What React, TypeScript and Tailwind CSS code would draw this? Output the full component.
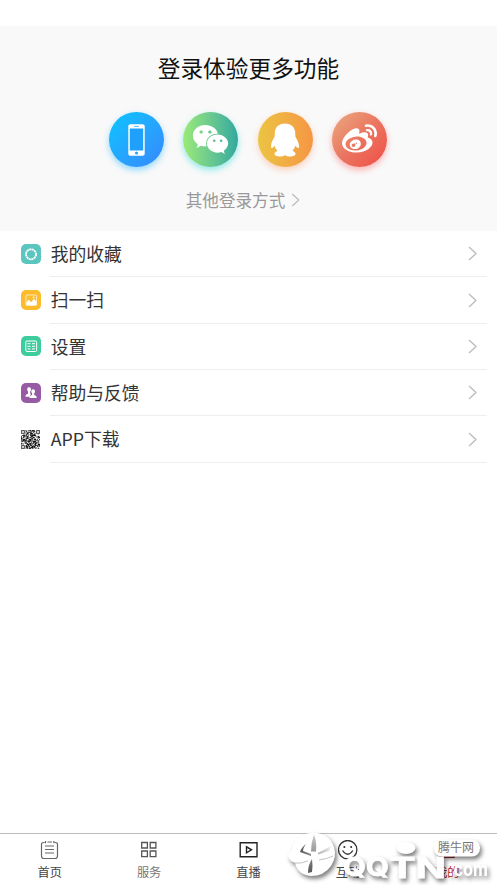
import type { ReactNode } from "react";
import { FaWeibo, FaWeixin } from "react-icons/fa";

function Chevron({ className }: { className: string }) {
  return (
    <svg className={className} viewBox="0 0 9 15" fill="none" stroke="currentColor" strokeWidth="1.3">
      <path d="M1 1l7 6.5L1 14" />
    </svg>
  );
}

function PhoneIcon() {
  return (
    <svg width="17" height="32" viewBox="0 0 17 32">
      <rect x="0.3" y="0.3" width="16.4" height="31.4" rx="2" fill="#fff" />
      <rect x="1.8" y="4.5" width="13.4" height="22" fill="#1fa0fb" />
      <path d="M6 2.4h5" stroke="#46b3ff" strokeWidth="0.9" />
      <circle cx="8.5" cy="29" r="1.5" fill="#1fa0fb" />
    </svg>
  );
}

function PenguinIcon() {
  return (
    <svg width="30" height="34" viewBox="0 0 30 34" fill="#fff">
      <path d="M15 .5C8.400 .5 4.700 4.800 4.700 10.200v3.200C2.800 16.500 1 20 1 23.200c0 1.600.6 2.200 1.300 1.700.9-.4 1.600-1.400 2.200-2.400.5 2 1.400 3.800 3 5.300-2 .8-3 1.900-3 3.200 0 1.500 2.200 2.500 5.200 2.500 2.400 0 4.300-.7 5.300-1.600 1 .9 2.900 1.600 5.300 1.600 3 0 5.200-1 5.200-2.500 0-1.300-1-2.400-3-3.200 1.600-1.500 2.500-3.300 3-5.300.6 1 1.300 2 2.200 2.400.7.5 1.300-.1 1.300-1.700 0-3.200-1.800-6.700-3.700-9.800v-3.200C25.300 4.800 21.600.5 15 .5z" />
    </svg>
  );
}

const logins = [
  { name: "phone", style: "bg-linear-to-br from-[#00c5ff] to-[#3487fc] shadow-[0_3px_6px_rgba(40,185,255,0.5)]", icon: <PhoneIcon /> },
  { name: "wechat", style: "bg-linear-to-r from-[#9bea76] to-[#30a99e] shadow-[0_3px_6px_rgba(45,220,220,0.5)]", icon: <FaWeixin className="h-[37px] w-[37px]" /> },
  { name: "qq", style: "bg-linear-to-r from-[#ebc442] to-[#f59644] shadow-[0_3px_6px_rgba(255,160,110,0.45)]", icon: <PenguinIcon /> },
  { name: "weibo", style: "bg-linear-to-br from-[#e8ab80] via-[#ea7561] to-[#f04943] shadow-[0_3px_6px_rgba(255,90,90,0.45)]", icon: <FaWeibo className="h-[35px] w-[35px]" /> },
];

function Tile({ className, children }: { className: string; children: ReactNode }) {
  return (
    <svg className={`h-5 w-5 rounded-[5px] ${className}`} viewBox="0 0 20 20" fill="none" stroke="#fff">
      {children}
    </svg>
  );
}

function QrIcon() {
  const size = 25;
  const inFinder = (x: number, y: number) => (x < 6 && y < 6) || (x > 18 && y < 6) || (x < 6 && y > 18);
  const cells: string[] = [];
  let seed = 7;
  for (let y = 0; y < size; y++) {
    for (let x = 0; x < size; x++) {
      seed = (seed * 1103 + 12345) % 65521;
      if (!inFinder(x, y) && seed % 100 < 60) cells.push(`M${x} ${y}h1v1h-1z`);
    }
  }
  return (
    <svg className="h-[19px] w-[19px]" viewBox="0 0 25 25">
      <path d={cells.join("")} fill="#111" />
      <path d="M.5.5h4v4h-4zM20.500.5h4v4h-4zM.5 20.500h4v4h-4z" fill="none" stroke="#111" />
      <path d="M2 2h1v1H2zM22 2h1v1h-1zM2 22h1v1H2z" fill="#111" />
    </svg>
  );
}

const rows: { label: string; icon: ReactNode }[] = [
  {
    label: "我的收藏",
    icon: (
      <Tile className="bg-[#5bc5bf]">
        <circle cx="10" cy="10.300" r="5" strokeWidth="1.800" strokeDasharray="2.200 0.420" />
      </Tile>
    ),
  },
  {
    label: "扫一扫",
    icon: (
      <Tile className="bg-[#fcbc2b]">
        <rect x="5" y="5" width="10.500" height="10.500" rx="1" strokeWidth="0.800" opacity="0.850" />
        <path d="M5.300 15v-2.500l2.500-3 2.200 2.700 3.200-3.500 2.300 3.300v3z" fill="#fff" stroke="none" />
        <circle cx="12.500" cy="7.300" r="0.900" fill="#fff" stroke="none" />
      </Tile>
    ),
  },
  {
    label: "设置",
    icon: (
      <Tile className="bg-[#3dcc9d]">
        <rect x="4.800" y="5" width="10.800" height="10.500" rx="1.200" strokeWidth="1" />
        <path d="M6.500 7.700h3M11 7.700h3M6.500 10.300h3M11 10.300h3M6.500 12.900h3M11 12.900h3" strokeWidth="1" />
      </Tile>
    ),
  },
  {
    label: "帮助与反馈",
    icon: (
      <Tile className="bg-[#975ba6]">
        <g fill="#fff" stroke="none">
          <path d="M6.200 6.300c0-1.400.8-2 1.900-2 1.200 0 1.900.8 1.900 2 0 1-.3 1.700-.8 2.200v1.800l.6.800-1 2.700H4.500c0-1.800.6-2.400 2.500-3V8.500c-.5-.5-.8-1.200-.8-2.200z" />
          <path d="M10.300 8.200c0-1.200.8-1.900 1.800-1.900 1.200 0 1.900.8 1.900 1.900 0 .9-.3 1.600-.8 2.100v1.800c1.700.5 2.500 1.100 2.500 3H8.500c0-1.900.8-2.500 2.600-3v-1.800c-.5-.5-.8-1.200-.8-2.100z" />
        </g>
      </Tile>
    ),
  },
  { label: "APP下载", icon: <QrIcon /> },
];

const tabs = [
  {
    label: "首页",
    style: "text-[#444]",
    icon: (
      <svg width="20" height="20" viewBox="0 0 20 20" fill="none" stroke="#666" strokeWidth="1.200">
        <path d="M4.500 2.500h-.7Q1.500 2.500 1.500 4.300V16q0 2.500 2.500 2.500h11q2.500 0 2.500-2.500V4.300q0-1.800-2.300-1.800h-.7M7.500 2h4.500" />
        <path d="M5.500 1v2.200M13.900 1v2.200M5 6h9M5 9.500h9M5 13h9" />
      </svg>
    ),
  },
  {
    label: "服务",
    style: "text-[#777]",
    icon: (
      <svg width="20" height="20" viewBox="0 0 20 20" fill="none" stroke="#555" strokeWidth="1.300">
        <path d="M2.700 2.500h5.700v5.500H2.700zM11.200 2.500h5.700v5.500h-5.700zM2.700 11h5.700v5.700H2.700zM11.200 11h5.700v5.700h-5.700z" />
      </svg>
    ),
  },
  {
    label: "直播",
    style: "text-[#444]",
    icon: (
      <svg width="20" height="20" viewBox="0 0 20 20" fill="none" stroke="#222" strokeWidth="1.400">
        <path d="M1.200 2.700H18v14H1.200zM7.500 6.800v6l5-3z" />
      </svg>
    ),
  },
  {
    label: "互动",
    style: "text-[#444]",
    icon: (
      <svg width="20" height="20" viewBox="0 0 20 20" fill="none" stroke="#333" strokeWidth="1.300">
        <circle cx="9.700" cy="9.700" r="9.200" />
        <path d="M4.500 10.500q5.200 7.500 10.400 0" />
        <path d="M6.300 7h.1M13.100 7h.1" strokeWidth="2" strokeLinecap="round" />
      </svg>
    ),
  },
  {
    label: "我的",
    style: "text-[#b3202f]",
    icon: (
      <svg width="20" height="20" viewBox="0 0 20 20" fill="none" stroke="#9d2633" strokeWidth="1.500">
        <circle cx="10" cy="5" r="3.500" />
        <path d="M3 17.300q0-7 7-7t7 7z" />
      </svg>
    ),
  },
];

function Watermark() {
  return (
    <div className="pointer-events-none absolute bottom-0 right-0 h-[60px] w-[217px] overflow-hidden">
      <svg
        className="absolute inset-0 drop-shadow-[2px_3px_2px_rgba(0,0,0,0.5)]"
        width="217"
        height="60"
        viewBox="0 0 217 60"
        fill="#fff"
      >
        <path d="M31 8C20 9 13 15 12 25q-3 2-4 6 1 5 7 7 3 12 16 13 13 0 20-10 6-9 3-19C51 12 42 7 31 8z" />
        <ellipse cx="126" cy="23" rx="9.500" ry="6" />
        <rect x="154" y="14.500" width="46" height="17" rx="8" />
        <g fontFamily="Inter, sans-serif" fontWeight="700" stroke="#fff" strokeWidth="0.800">
          <text x="63" y="51" fontSize="26" textLength="46" lengthAdjust="spacingAndGlyphs">QQ</text>
          <text x="109" y="53" fontSize="29" textLength="57" lengthAdjust="spacingAndGlyphs">TN</text>
          <text x="168" y="51" fontSize="19" strokeWidth="0" textLength="40" lengthAdjust="spacingAndGlyphs">.com</text>
        </g>
      </svg>
      <svg className="absolute inset-0" width="217" height="60" viewBox="0 0 217 60">
        <defs>
          <linearGradient id="blade" x1="0" y1="0" x2="0" y2="1">
            <stop offset="0" stopColor="#ccc" />
            <stop offset="1" stopColor="#555" />
          </linearGradient>
          <linearGradient id="arm" x1="0" y1="0" x2="1" y2="0">
            <stop offset="0" stopColor="#555" />
            <stop offset="1" stopColor="#eee" />
          </linearGradient>
        </defs>
        <path d="M34 9.500q-3 8-3 17h5q1-9-2-17zM32 34q-4 6-4 14l4-1q1-6 0-13z" fill="url(#blade)" />
        <path d="M26 19q-5 4-6 8l11 4v-2l-8-3q0-3 3-7zM51 21l-13 7v1.500l11-3.500z" fill="url(#arm)" />
        <path d="M13 38q8 1 15-2M39 35q8-1 14-4" fill="none" stroke="#bbb" strokeWidth="0.900" />
      </svg>
      <span className="absolute left-[158px] top-[14px] text-[12px] leading-[16px] text-[#777]">腾牛网</span>
    </div>
  );
}

export default function App() {
  return (
    <div className="relative flex h-[885px] w-[497px] flex-col overflow-hidden bg-white pt-[26px] font-['Noto_Sans_CJK_SC',sans-serif]">
      <header className="flex h-[205px] flex-col items-center bg-[#f9f9f9] pt-[25px]">
        <h1 className="text-[22.700px] leading-[34px] text-[#111]">登录体验更多功能</h1>
        <div className="mt-[27px] flex gap-[19.500px] pr-px">
          {logins.map((login) => (
            <button key={login.name} className={`flex h-[55px] w-[55px] items-center justify-center rounded-full text-white ${login.style}`}>
              {login.icon}
            </button>
          ))}
        </div>
        <div className="mt-5 flex items-center gap-1.5 pr-[11px] text-[16.600px] leading-[26px] text-[#999]">
          <span>其他登录方式</span>
          <Chevron className="h-[14px] w-[9px] text-[#bbb]" />
        </div>
      </header>
      <main className="flex-1">
        {rows.map((row) => (
          <div key={row.label} className="flex h-[46.350px] items-center pl-[21px] pr-2.5">
            <span className="flex w-5 shrink-0 justify-start pb-px">{row.icon}</span>
            <div className="ml-[9px] flex h-full flex-1 items-center justify-between border-b border-[#eee] pl-[0.700px] pr-2.5 text-[17.800px] text-[#333]">
              <span className="pb-px">{row.label}</span>
              <Chevron className="h-[15px] w-[9px] text-[#bbb]" />
            </div>
          </div>
        ))}
      </main>
      <nav className="flex h-[52px] border-t border-[#bbb]">
        {tabs.map((tab) => (
          <div key={tab.label} className={`flex flex-1 flex-col items-center pt-1.5 text-[12.200px] leading-[18px] ${tab.style}`}>
            {tab.icon}
            <span className="mt-[3px]">{tab.label}</span>
          </div>
        ))}
      </nav>
      <Watermark />
    </div>
  );
}
